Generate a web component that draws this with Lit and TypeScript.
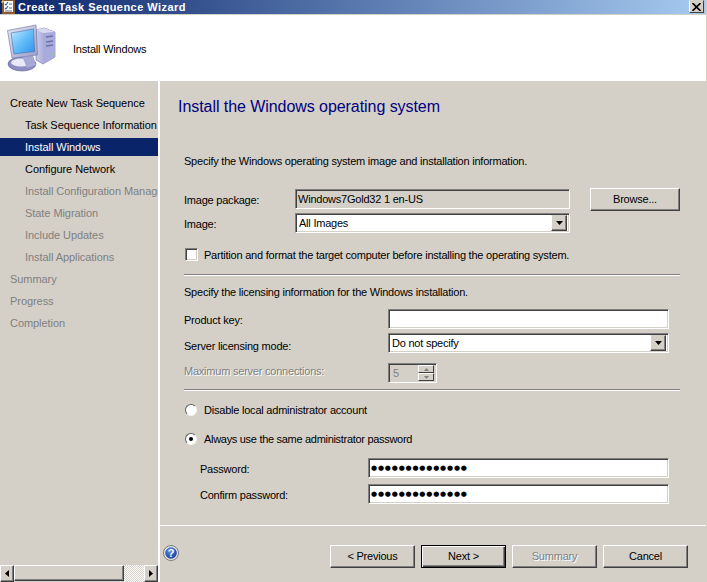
import { LitElement, html, css, svg } from "lit";
import { customElement } from "lit/decorators.js";

const computer = svg`<svg class="pc" viewBox="0 0 50 50" width="50" height="50">
  <defs>
    <linearGradient id="scr" x1="0" y1="0" x2="1" y2="1"><stop offset="0" stop-color="#c4e8ff"/><stop offset=".5" stop-color="#63bef8"/><stop offset="1" stop-color="#2f90ec"/></linearGradient>
    <linearGradient id="frm" x1="0" y1="0" x2="1" y2="1"><stop offset="0" stop-color="#e6e8f4"/><stop offset="1" stop-color="#9a9cc8"/></linearGradient>
    <linearGradient id="twr" x1="0" y1="0" x2="1" y2="0"><stop offset="0" stop-color="#c6c8ea"/><stop offset="1" stop-color="#8a8cc4"/></linearGradient>
  </defs>
  <path d="M29 6 L37 4 L48 8 L48 33 L36 40 L29 36 Z" fill="url(#twr)" stroke="#6a6ca4" stroke-width=".6"/>
  <path d="M36 9 L48 8 L48 33 L36 40 Z" fill="#a9abdc"/>
  <path d="M29 6 L37 4 L48 8 L36 9 Z" fill="#d9daf2"/>
  <path d="M39 13 L46 12 M39 18 L46 17 M39 22 L46 21" stroke="#6e70a8" stroke-width="1.6"/>
  <circle cx="46" cy="30" r="1" fill="#6fe06f"/>
  <ellipse cx="15" cy="40" rx="14" ry="7" fill="#8d8dc4" stroke="#5a5a94" stroke-width=".6"/>
  <ellipse cx="14" cy="38.5" rx="10" ry="4" fill="#e8e8f6"/>
  <path d="M15 32 L26 31 L29 41 L20 44 Z" fill="#a6a8d6"/>
  <path d="M0.5 6.5 L29 1 L30.5 31 L5 34 Z" fill="url(#frm)" stroke="#7c7eb0" stroke-width=".7"/>
  <path d="M4 9 L26.5 5 L27.5 27.5 L7 30 Z" fill="url(#scr)" stroke="#4b6fa8" stroke-width=".6"/>
</svg>`;

const titleIcon = svg`<svg class="ti" viewBox="0 0 14 14" width="14" height="14">
  <rect x="1" y="0" width="13" height="14" fill="#8a5a34"/>
  <rect x="3" y="1" width="9" height="11" fill="#fff"/>
  <path d="M4 4 L5 5 L7 2 M4 8 L5 9 L7 6" stroke="#2a62b8" stroke-width="1.1" fill="none"/>
  <path d="M8 4 H11 M8 8 H11 M4 11 H11" stroke="#6b6b6b" stroke-width="1"/>
  <path d="M2 0 L3 2 L1 3 L0 2 Z" fill="#ffcf3a"/>
</svg>`;

const close = svg`<svg viewBox="0 0 9 8" width="9" height="8"><path d="M.5 0 L8.5 8 M8.5 0 L.5 8" stroke="#000" stroke-width="1.6"/></svg>`;

const down = svg`<svg viewBox="0 0 7 4" width="7" height="4"><path d="M0 0 H7 L3.5 4 Z" fill="#000"/></svg>`;
const spinUp = svg`<svg viewBox="0 0 5 3" width="5" height="3"><path d="M2.5 0 L5 3 H0 Z" fill="#808080"/></svg>`;
const spinDown = svg`<svg viewBox="0 0 5 3" width="5" height="3"><path d="M0 0 H5 L2.5 3 Z" fill="#808080"/></svg>`;
const left = svg`<svg viewBox="0 0 4 7" width="4" height="7"><path d="M4 0 V7 L0 3.5 Z" fill="#000"/></svg>`;
const right = svg`<svg viewBox="0 0 4 7" width="4" height="7"><path d="M0 0 V7 L4 3.5 Z" fill="#000"/></svg>`;

const help = svg`<svg class="help" viewBox="0 0 16 16" width="16" height="16">
  <defs><radialGradient id="hb" cx=".4" cy=".3" r=".8"><stop offset="0" stop-color="#5f8fe8"/><stop offset="1" stop-color="#12329c"/></radialGradient></defs>
  <circle cx="8" cy="8" r="7.5" fill="#e4e4e4" stroke="#7c7c7c"/>
  <circle cx="8" cy="8" r="5.8" fill="url(#hb)"/>
  <text x="8" y="12" text-anchor="middle" font-family="Liberation Sans, sans-serif" font-weight="700" font-size="11" fill="#fff">?</text>
</svg>`;

@customElement("app-root")
export class AppRoot extends LitElement {
  static styles = css`
    :host {
      display: block; width: 707px; height: 582px; overflow: hidden;
      background: #d4d0c8; color: #000;
      font: 11px/16px "Liberation Sans", Arial, sans-serif;
      box-sizing: border-box;
    }
    .win { display: flex; flex-direction: column; height: 582px; width: 706px; }
    .titlebar {
      height: 14px; flex: none; display: flex; align-items: center; gap: 3px; padding: 0 2px 0 1px;
      background: linear-gradient(90deg, #0a246a, #a6caf0);
      border-bottom: 1px solid #d4d0c8; box-sizing: content-box; overflow: hidden;
    }
    .ti { flex: none; }
    .tt { color: #fff; font-weight: 700; font-size: 11px; line-height: 14px; letter-spacing: .46px; }
    .x {
      margin-left: auto; width: 15px; height: 13px; margin-top: -1px; background: #d4d0c8; box-sizing: border-box;
      border: 1px solid; border-color: #d4d0c8 #404040 #404040 #fff;
      display: flex; align-items: center; justify-content: center;
    }
    .head { height: 66px; flex: none; background: #fff; display: flex; align-items: center; gap: 16px; padding-left: 7px; letter-spacing: -.2px; }
    .head span { padding-top: 2px; }
    .pc { flex: none; margin-top: 2px; }
    .body { flex: 1; display: flex; min-height: 0; }
    .nav {
      width: 158px; flex: none; border-right: 2px solid #fff; display: flex; flex-direction: column;
      padding-top: 13px; overflow: hidden; box-sizing: content-box; letter-spacing: -.06px;
    }
    .item { height: 18px; line-height: 18px; margin-bottom: 4px; padding-left: 10px; white-space: nowrap; overflow: hidden; flex: none; }
    .sub { padding-left: 25px; }
    .sel { background: #0a246a; color: #fff; }
    .off { color: #808080; }
    .scroll { margin-top: auto; height: 17px; flex: none; display: flex; background: #d4d0c8; align-items: stretch; }
    .sb {
      box-sizing: border-box; border: 1px solid; border-color: #fff #404040 #404040 #fff;
      box-shadow: inset -1px -1px 0 #808080; display: flex; align-items: center; justify-content: center;
    }
    .sb.a { width: 14px; flex: none; }
    .sb.t { width: 110px; flex: none; }
    .chk {
      width: 20px; flex: none;
      background-color: #fff;
      background-image: conic-gradient(#d4d0c8 25%, #fff 0 50%, #d4d0c8 0 75%, #fff 0);
      background-size: 2px 2px;
    }
    .main { flex: 1; padding-left: 24px; display: flex; flex-direction: column; min-width: 0; letter-spacing: -.22px; }
    h1 {
      margin: 16px 0 0 -6px; font-weight: 400; font-size: 16px; line-height: 20px; color: #00007f; height: 20px; letter-spacing: -.06px;
    }
    .t { height: 16px; line-height: 16px; white-space: nowrap; }
    .intro { margin-top: 36px; }
    .g1 { margin-top: 20px; display: grid; grid-template-columns: 111px 275px 20px 90px; grid-template-rows: 20px 20px; row-gap: 4px; align-items: start; }
    .lab { line-height: 20px; padding-top: 1px; white-space: nowrap; height: 20px; box-sizing: border-box; }
    .low { padding-top: 3px; }
    .field {
      height: 20px; box-sizing: border-box; border: 1px solid; border-color: #808080 #fff #fff #808080;
      box-shadow: inset 1px 1px 0 #404040, inset -1px -1px 0 #d4d0c8;
      padding-left: 2px; line-height: 17px; white-space: nowrap; display: flex; align-items: center; position: relative;
      overflow: hidden;
    }
    .white { background: #fff; }
    .combo { padding-left: 3px; }
    .combo b {
      margin-left: auto; width: 16px; height: 16px; flex: none; box-sizing: border-box; background: #d4d0c8; margin-right: 2px;
      border: 1px solid; border-color: #d4d0c8 #404040 #404040 #fff; box-shadow: inset -1px -1px 0 #808080;
      display: flex; align-items: center; justify-content: center;
    }
    .btn {
      width: 90px; height: 23px; box-sizing: border-box; background: #d4d0c8; text-align: center; line-height: 21px;
      border: 1px solid; border-color: #fff #404040 #404040 #fff; box-shadow: inset -1px -1px 0 #808080; white-space: nowrap;
    }
    .browse { margin-top: -1px; grid-column: 4; grid-row: 1; }
    .r2c1 { grid-column: 1; grid-row: 2; }
    .r2c2 { grid-column: 2; grid-row: 2; }
    .cr { display: flex; align-items: center; gap: 6px; height: 13px; padding-left: 1px; }
    .box {
      width: 13px; height: 13px; box-sizing: border-box; background: #fff; flex: none;
      border: 1px solid; border-color: #808080 #fff #fff #808080; box-shadow: inset 1px 1px 0 #404040, inset -1px -1px 0 #d4d0c8;
    }
    .cr.ch { margin-top: 15px; }
    .sep { margin-top: 13px; width: 496px; height: 2px; box-sizing: border-box; border-top: 1px solid #808080; border-bottom: 1px solid #fff; flex: none; }
    .lic { margin-top: 8px; }
    .g2 { margin-top: 9px; display: grid; grid-template-columns: 204px 281px; grid-template-rows: 20px 20px 26px; row-gap: 4px; }
    .g2 .dis { margin-top: 3px; }
    .off2 { color: #808080; text-shadow: 1px 1px 0 #fff; }
    .spin {
      margin-top: 6px; width: 49px; background: #d4d0c8; color: #808080; padding-left: 4px;
    }
    .arrows { margin-left: auto; margin-right: 2px; width: 16px; display: flex; flex-direction: column; flex: none; }
    .arrows i {
      height: 8px; box-sizing: border-box; border: 1px solid; border-color: #fff #404040 #404040 #fff;
      display: flex; align-items: center; justify-content: center; background: #d4d0c8;
    }
    .sep2 { margin-top: 6px; }
    .rd { height: 12px; gap: 7px; }
    .r1 { margin-top: 13px; }
    .r2 { margin-top: 17px; }
    .radio {
      width: 12px; height: 12px; box-sizing: border-box; border-radius: 50%; background: #fff; flex: none;
      border: 1px solid; border-color: #606060 #f4f4f4 #f4f4f4 #606060;
      display: flex; align-items: center; justify-content: center;
    }
    .radio i { width: 4px; height: 4px; border-radius: 50%; background: #000; }
    .long { letter-spacing: -.3px; }
    .g3 { margin-top: 13px; padding-left: 16px; display: grid; grid-template-columns: 168px 301px; grid-template-rows: 20px 20px; row-gap: 6px; }
    .dots { font: 7px/17px "DejaVu Sans", sans-serif; letter-spacing: .8px; padding-left: 2px; }
    .rule { margin: 21px 0 0 -24px; height: 1px; background: #fff; flex: none; }
    .foot { margin: 19px 0 0 -24px; display: flex; align-items: flex-start; padding: 0 18px 0 3px; }
    .btns { margin-left: auto; display: flex; gap: 6px; }
    .w85 { width: 85px; }
    .def { border: 1px solid #000; box-shadow: inset 1px 1px 0 #fff, inset -1px -1px 0 #404040, inset -2px -2px 0 #808080; }
  `;

  render() {
    const nav: [string, string][] = [
      ["Create New Task Sequence", ""],
      ["Task Sequence Information", "sub"],
      ["Install Windows", "sub sel"],
      ["Configure Network", "sub"],
      ["Install Configuration Manager", "sub off"],
      ["State Migration", "sub off"],
      ["Include Updates", "sub off"],
      ["Install Applications", "sub off"],
      ["Summary", "off"],
      ["Progress", "off"],
      ["Completion", "off"],
    ];
    return html`<div class="win">
      <div class="titlebar">${titleIcon}<span class="tt">Create Task Sequence Wizard</span><span class="x">${close}</span></div>
      <div class="head">${computer}<span>Install Windows</span></div>
      <div class="body">
        <div class="nav">
          ${nav.map(([t, c]) => html`<div class="item ${c}">${t}</div>`)}
          <div class="scroll">
            <div class="sb a">${left}</div><div class="sb t"></div><div class="chk"></div><div class="sb a">${right}</div>
          </div>
        </div>
        <div class="main">
          <h1>Install the Windows operating system</h1>
          <div class="t intro">Specify the Windows operating system image and installation information.</div>
          <div class="g1">
            <div class="lab">Image package:</div>
            <div class="field">Windows7Gold32 1 en-US</div>
            <div class="btn browse">Browse...</div>
            <div class="lab r2c1">Image:</div>
            <div class="field white combo r2c2">All Images<b>${down}</b></div>
          </div>
          <div class="cr ch"><span class="box"></span><span>Partition and format the target computer before installing the operating system.</span></div>
          <div class="sep"></div>
          <div class="t lic">Specify the licensing information for the Windows installation.</div>
          <div class="g2">
            <div class="lab">Product key:</div>
            <div class="field white"></div>
            <div class="lab low">Server licensing mode:</div>
            <div class="field white combo">Do not specify<b>${down}</b></div>
            <div class="lab dis off2">Maximum server connections:</div>
            <div class="field spin">5<span class="arrows"><i>${spinUp}</i><i>${spinDown}</i></span></div>
          </div>
          <div class="sep sep2"></div>
          <div class="cr rd r1"><span class="radio"></span><span>Disable local administrator account</span></div>
          <div class="cr rd r2"><span class="radio"><i></i></span><span class="long">Always use the same administrator password</span></div>
          <div class="g3">
            <div class="lab">Password:</div>
            <div class="field white dots">●●●●●●●●●●●●●●</div>
            <div class="lab">Confirm password:</div>
            <div class="field white dots">●●●●●●●●●●●●●●</div>
          </div>
          <div class="rule"></div>
          <div class="foot">
            ${help}
            <div class="btns">
              <div class="btn w85">&lt; Previous</div>
              <div class="btn w85 def">Next &gt;</div>
              <div class="btn w85 off2">Summary</div>
              <div class="btn w85">Cancel</div>
            </div>
          </div>
        </div>
      </div>
    </div>`;
  }
}
